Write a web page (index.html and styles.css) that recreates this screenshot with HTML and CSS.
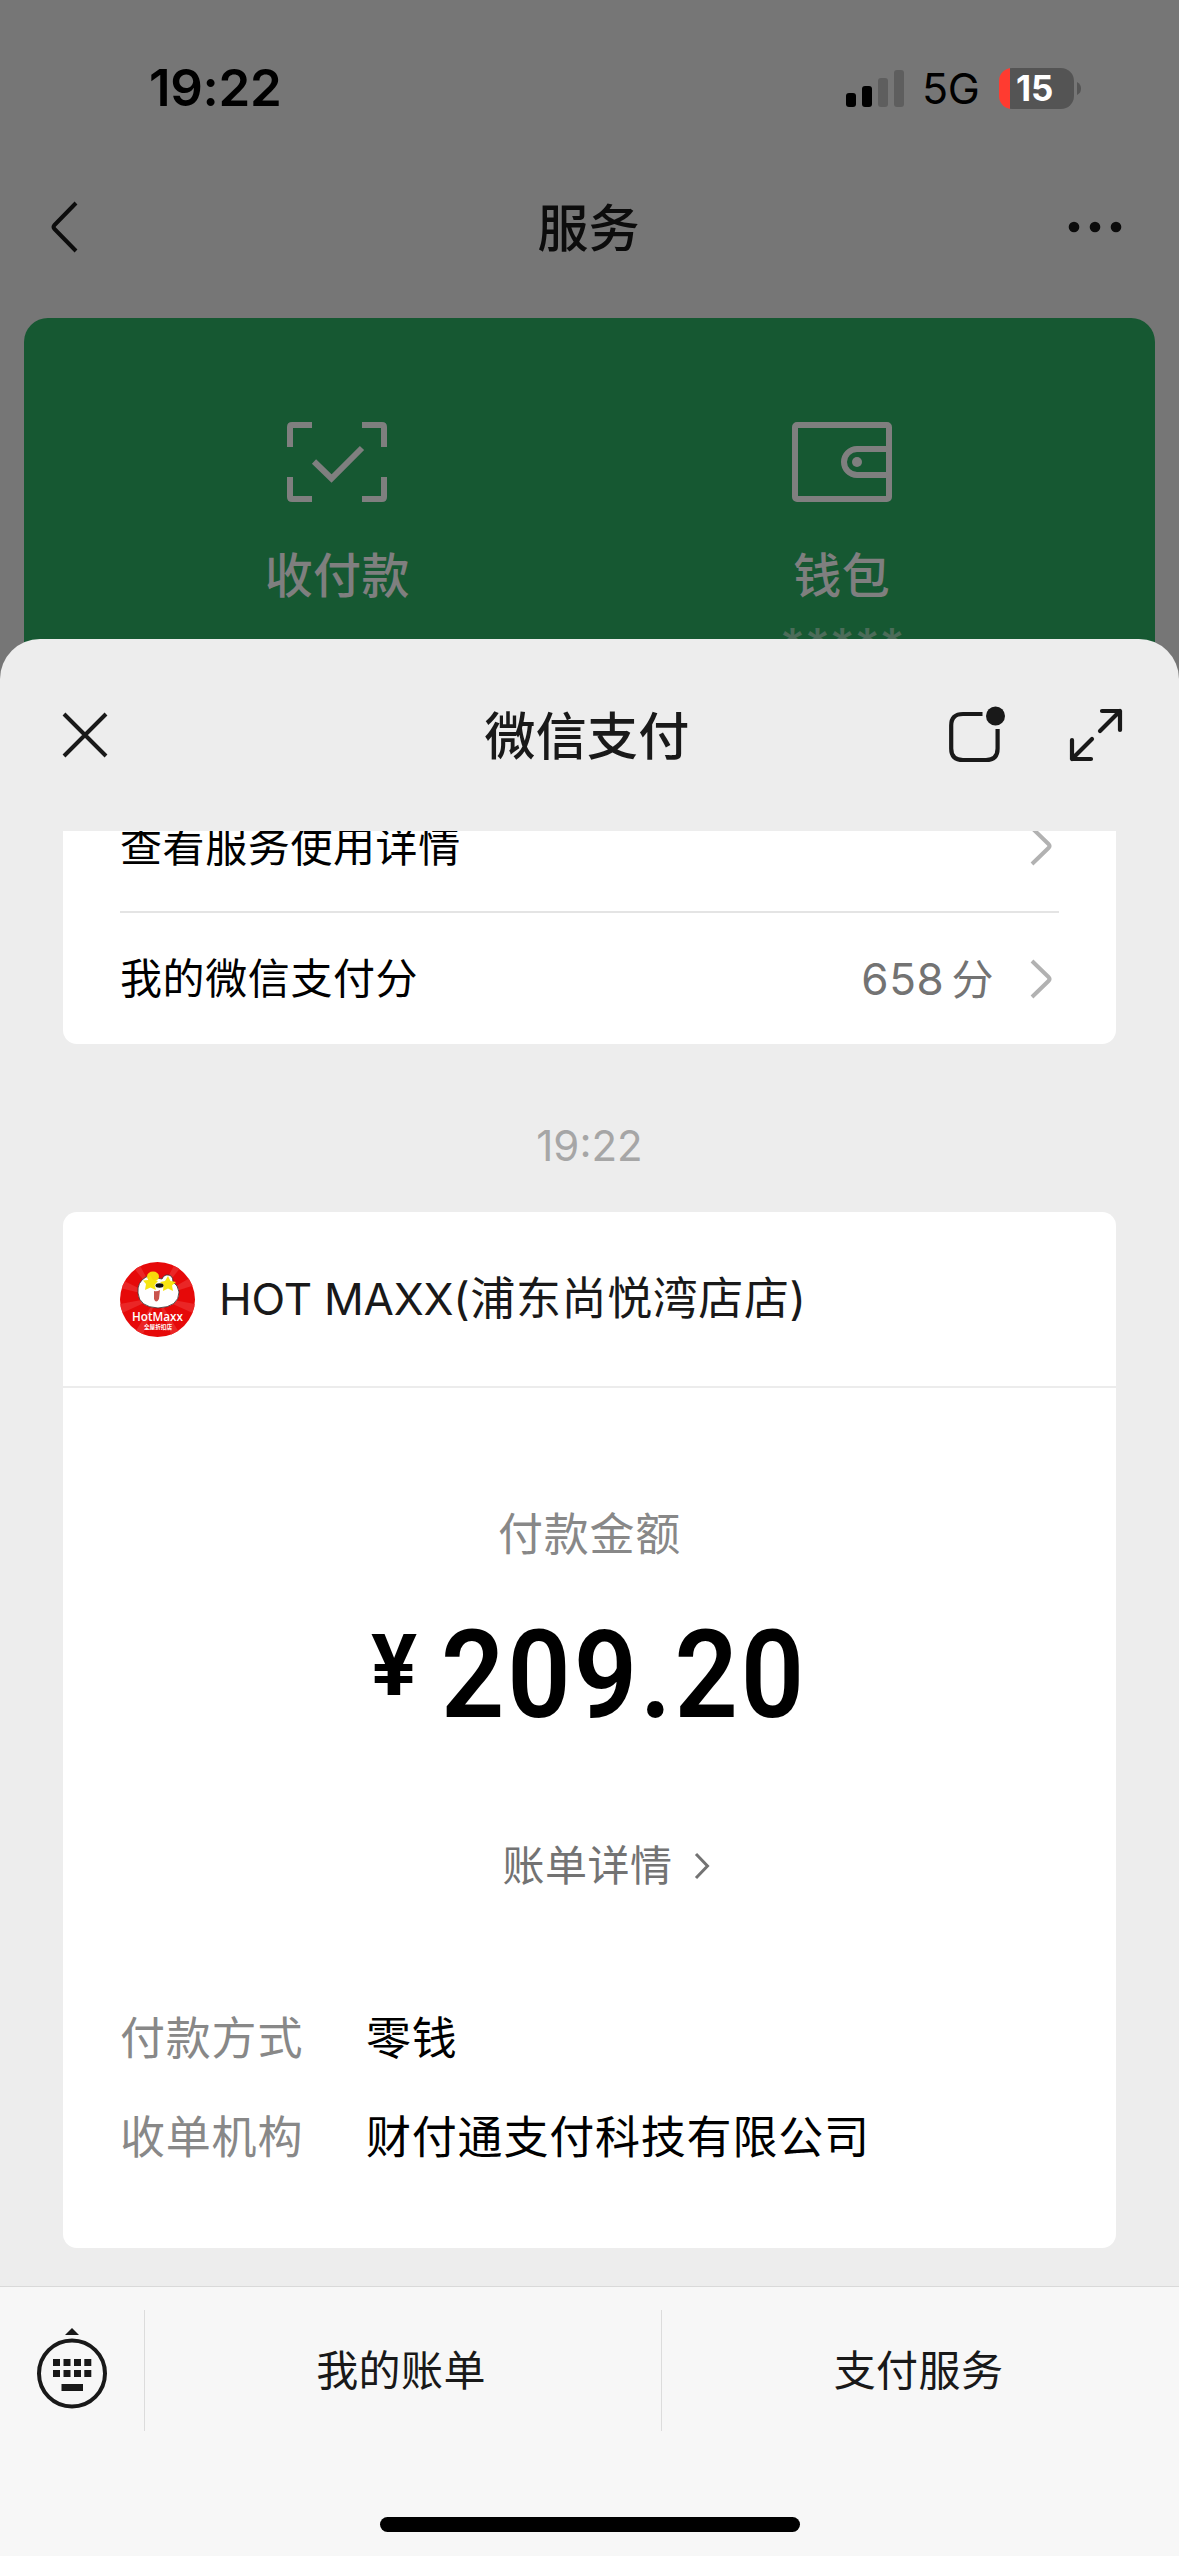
FILE: index.html
```html
<!DOCTYPE html>
<html lang="zh-CN">
<head>
<meta charset="utf-8">
<title>微信支付</title>
<link rel="stylesheet" href="styles.css">
</head>
<body>
<div class="screen">
  <div class="backdrop">
    <div class="status">
      <span class="status-time">19:22</span>
      <div class="status-right">
        <svg class="signal" width="58" height="37" viewBox="0 0 58 37">
          <rect x="0" y="23" width="10" height="14" rx="3"/>
          <rect x="16" y="16" width="10" height="21" rx="3"/>
          <rect x="32" y="8" width="10" height="29" rx="3" fill="#5e5e5e"/>
          <rect x="48" y="0" width="10" height="37" rx="3" fill="#5e5e5e"/>
        </svg>
        <span class="network">5G</span>
        <div class="battery"><span class="battery-level">15</span></div>
        <svg class="battery-cap" width="4" height="13" viewBox="0 0 4 13"><path d="M0 0Q4 2 4 6.500T0 13Z" fill="#555"/></svg>
      </div>
    </div>
    <div class="nav">
      <svg width="28" height="52" viewBox="0 0 28 52" fill="none" stroke="#0c0c0c" stroke-width="4"><path d="M26 2L4.500 24Q2.500 26 4.500 28L26 50"/></svg>
      <span class="title">服务</span>
      <svg class="more" width="54" height="12" viewBox="0 0 54 12" fill="#0c0c0c"><circle cx="6" cy="6" r="5.300"/><circle cx="27" cy="6" r="5.300"/><circle cx="48" cy="6" r="5.300"/></svg>
    </div>
    <div class="services">
      <div class="service">
        <svg width="100" height="80" viewBox="0 0 100 80" fill="none" stroke="#7f7f7f" stroke-width="6"><path d="M3 25V5Q3 3 5 3H25M75 3H95Q97 3 97 5V25M97 55V75Q97 77 95 77H75M25 77H5Q3 77 3 75V55M27 39.500L44.500 56.500L75 26"/></svg>
        <span>收付款</span>
      </div>
      <div class="service">
        <svg width="100" height="80" viewBox="0 0 100 80" fill="none" stroke="#7f7f7f" stroke-width="6"><rect x="3" y="3" width="94" height="74" rx="2"/><path d="M97 27H65A13 13 0 0 0 65 53H97"/><circle cx="65" cy="40" r="5" fill="#7f7f7f" stroke="none"/></svg>
        <span>钱包</span>
        <span class="masked">*****</span>
      </div>
    </div>
  </div>

  <div class="sheet">
    <div class="sheet-head">
      <svg width="46" height="46" viewBox="0 0 46 46" stroke="#191919" stroke-width="4"><path d="M2 2L44 44M44 2L2 44"/></svg>
      <span class="title">微信支付</span>
      <div class="sheet-actions">
        <svg width="56" height="60" viewBox="0 0 56 60" fill="none" stroke="#191919" stroke-width="4.200"><path d="M33.500 9H14Q2.200 9 2.200 20.500V43.500Q2.200 55 14 55H37Q48.600 55 48.600 43.500V24"/><circle cx="46.500" cy="11" r="9.500" fill="#191919" stroke="none"/></svg>
        <svg width="54" height="54" viewBox="0 0 54 54" fill="none" stroke="#191919" stroke-width="4.200" stroke-linecap="round" stroke-linejoin="round"><path d="M33 3H51V22M51 3L31 23M3 32V51H22M3 51L23 31"/></svg>
      </div>
    </div>

    <div class="feed">
      <div class="card card-top">
        <div class="row row-cut"><span>查看服务使用详情</span>
          <svg class="chev" width="24" height="40" viewBox="0 0 24 40"><path d="M2 2L18.500 18Q20.500 20 18.500 22L2 38"/></svg></div>
        <div class="row row-score"><span>我的微信支付分</span>
          <div class="score"><span class="score-num">658</span><span>分</span>
          <svg class="chev" width="24" height="40" viewBox="0 0 24 40"><path d="M2 2L18.500 18Q20.500 20 18.500 22L2 38"/></svg></div></div>
      </div>
      <div class="stamp">19:22</div>
      <div class="card card-pay">
        <div class="merchant">
          <svg width="75" height="75" viewBox="0 0 75 75">
            <defs><clipPath id="disc"><circle cx="37.500" cy="37.500" r="37.500"/></clipPath></defs>
            <g clip-path="url(#disc)">
              <rect width="75" height="75" fill="#e60909"/>
              <path fill="#ea2626" d="M37 35L9 0H18ZM37 35L56 0H65ZM37 35L75 13V23ZM37 35L0 17V26ZM37 35L0 42V52ZM37 35L75 42V52ZM37 35L12 75H22ZM37 35L52 75H62Z"/>
            </g>
            <path d="M26 15Q17 20 18 31Q19 45 38 46Q59 45 59 30Q58 23 53 20Q53 12 46 13Q43 14 42 17Q37 15 32 17Q29 13 26 15Z" fill="#fff" stroke="#333" stroke-width=".8"/>
            <ellipse cx="33" cy="14.500" rx="6" ry="5" fill="#f8d90c"/>
            <path d="M30 13L33 18L38 19L34.500 23L36 28L30.500 25.500L25 28L26 22L23 18.500L28 18ZM48 14L50.500 19L56 20L52 23.500L53 29L48 26.500L43 29L43.500 23.500L40 20L45 19Z" fill="#f7e510"/>
            <ellipse cx="39.500" cy="23.500" rx="4" ry="2.200" fill="#111"/>
            <path d="M34 29Q37 30 40 28L39 37Q36 42 34 37Z" fill="#c9544d"/>
            <text x="12" y="58.500" class="logo-name" textLength="51" lengthAdjust="spacingAndGlyphs">HotMaxx</text>
            <text x="24" y="66.500" class="logo-sub" textLength="28" lengthAdjust="spacingAndGlyphs">全屋折扣店</text>
          </svg>
          <span class="merchant-name">HOT MAXX<span class="branch">(浦东尚悦湾店店)</span></span>
        </div>
        <div class="pay-label">付款金额</div>
        <div class="amount"><span class="yen">¥</span><span class="digits">209.20</span></div>
        <div class="bill"><span>账单详情</span><svg width="16" height="28" viewBox="0 0 16 28" fill="none" stroke="#737373" stroke-width="3"><path d="M2 2L13.500 14L2 26"/></svg></div>
        <dl class="facts">
          <dt>付款方式</dt><dd>零钱</dd>
          <dt>收单机构</dt><dd>财付通支付科技有限公司</dd>
        </dl>
      </div>
    </div>

    <div class="toolbar">
      <div class="tool-key">
        <svg width="72" height="84" viewBox="0 0 72 84" fill="#191919"><path d="M36 2L43 9H29Z"/><circle cx="36" cy="47.500" r="33" fill="none" stroke="#191919" stroke-width="4"/><path d="M17 33h7v7h-7zM27.500 33h7v7h-7zM38 33h7v7h-7zM48.300 33h7v7h-7zM17 44h7v7h-7zM27.500 44h7v7h-7zM38 44h7v7h-7zM48.300 44h7v7h-7zM25.500 58h21.500v7h-21.500z"/></svg>
      </div>
      <div class="tool">我的账单</div>
      <div class="tool">支付服务</div>
    </div>
    <div class="home"></div>
  </div>
</div>
</body>
</html>
```

FILE: styles.css
```css
* { box-sizing: border-box; }
body {
  margin: 0;
  background: #767676;
  font-family: Inter, "Noto Sans CJK SC", sans-serif;
  color: #000;
}
svg { display: block; flex: none; }
.screen { width: 1179px; height: 2556px; overflow: hidden; }

.backdrop { height: 720px; background: #767676; overflow: hidden; }
.status {
  height: 164px;
  padding: 12px 98px 0 149px;
  display: flex;
  align-items: center;
  justify-content: space-between;
}
.status-time { font-size: 51px; font-weight: 600; line-height: 60px; letter-spacing: -0.3px; }
.status-right { display: flex; align-items: center; }
.network { margin-left: 18px; width: 58px; font-size: 43px; line-height: 52px; letter-spacing: -0.500px; }
.battery {
  margin-left: 19px;
  width: 75px;
  height: 41px;
  border-radius: 13px;
  background: linear-gradient(90deg, #ff3b30 11px, #545454 11px);
}
.battery-level {
  display: block;
  padding-left: 17px;
  color: #fff;
  font-size: 35px;
  font-weight: 700;
  line-height: 41px;
}
.battery-cap { margin-left: 3px; }

.nav {
  height: 126px;
  padding: 0 57px 0 50px;
  display: grid;
  grid-template-columns: 1fr auto 1fr;
  align-items: center;
  color: #0c0c0c;
}
.more { justify-self: end; }
.nav .title { margin: 3px 0 0 5px; }
.title { font-size: 51px; font-weight: 500; line-height: 60px; }

.services {
  margin: 28px 24px 0;
  height: 420px;
  padding: 104px 61px 0;
  border-radius: 24px;
  background: #165832;
  display: grid;
  grid-template-columns: 1fr 1fr;
}
.service {
  display: flex;
  flex-direction: column;
  align-items: center;
  color: #7f7f7f;
  font-size: 48px;
  font-weight: 500;
  letter-spacing: 0.400px;
  line-height: 60px;
}
.service svg { margin-bottom: 44px; }
.masked { margin-top: 10px; font-size: 48px; font-weight: 600; letter-spacing: -1px; color: #4b6c59; }

.sheet {
  position: relative;
  margin-top: -81px;
  height: 1917px;
  border-radius: 40px 40px 0 0;
  background: #ededed;
  display: flex;
  flex-direction: column;
}
.sheet-head {
  height: 192px;
  padding: 0 56px 0 62px;
  display: grid;
  grid-template-columns: 1fr auto 1fr;
  align-items: center;
  color: #191919;
}
.sheet-head .title { margin: 3px 11px 0 0; letter-spacing: 0.300px; }
.sheet-actions { display: flex; align-items: center; justify-content: flex-end; gap: 64px; }

.feed { height: 1455px; padding: 0 63px; overflow: hidden; }
.card { background: #fff; border-radius: 14px; }
.card-top { height: 213px; padding: 0 57px; border-radius: 0 0 14px 14px; overflow: hidden; }
.row {
  display: flex;
  align-items: center;
  justify-content: space-between;
  font-size: 42px;
  letter-spacing: 0.600px;
  height: 132px;
}
.row > span { margin-top: -6px; }
.row-cut { margin-top: -50px; border-bottom: 2px solid #e4e4e4; }
.row-score { height: 131px; }
.score { display: flex; align-items: center; color: #737373; }
.score span { margin-top: -5px; }
.score .score-num { margin: 0 7px 0 0; font-size: 44px; }
.score .chev { margin-left: 36px; }
.chev { margin-right: 5px; fill: none; stroke: #b2b2b2; stroke-width: 4; }
.stamp { height: 168px; padding-top: 72px; font-size: 42px; line-height: 60px; text-align: center; color: #a6a6a6; }

.card-pay { height: 1036px; }
.merchant {
  height: 176px;
  padding: 0 57px;
  display: flex;
  align-items: center;
  gap: 24px;
  border-bottom: 2px solid #ececec;
  font-size: 44px;
  line-height: 60px;
  color: #191919;
}
.merchant-name { margin-top: -1px; letter-spacing: -0.200px; }
.branch { font-size: 45px; letter-spacing: 0.600px; }
.logo-name { font-family: "Open Sans", sans-serif; font-size: 13px; font-weight: 600; fill: #fff; }
.logo-sub { font-family: "Noto Sans CJK SC", sans-serif; font-size: 6px; font-weight: 700; fill: #fff; }
.pay-label { margin-top: 117px; font-size: 45px; line-height: 60px; letter-spacing: 0.700px; text-align: center; color: #888; }
.amount {
  margin-top: 46px;
  height: 130px;
  padding-left: 308px;
  display: flex;
  font-family: Roboto, sans-serif;
}
.yen { width: 70px; padding-top: 5px; font-size: 86px; font-weight: 700; line-height: 100px; }
.digits {
  font-size: 122px;
  font-weight: 600;
  line-height: 130px;
  letter-spacing: 3.200px;
  transform: scaleX(.91);
  transform-origin: left;
}
.bill {
  margin-top: 95px;
  padding-left: 33px;
  display: flex;
  align-items: center;
  justify-content: center;
  gap: 21px;
  font-size: 42px;
  line-height: 60px;
  letter-spacing: 0.500px;
  color: #737373;
}
.facts {
  margin: 113px 57px 0;
  display: grid;
  grid-template-columns: 246px 1fr;
  row-gap: 39px;
  font-size: 45px;
  line-height: 60px;
  letter-spacing: 0.800px;
}
.facts dt { color: #888; }
.facts dd { margin: 0; }

.toolbar {
  height: 170px;
  border-top: 1px solid #d9d9d9;
  padding: 23px 0 26px;
  display: grid;
  grid-template-columns: 144px 517px 1fr;
  background: #f7f7f7;
}
.tool-key { display: flex; justify-content: center; padding-top: 16px; }
.tool {
  padding-right: 4px;
  border-left: 1px solid #dcdcdc;
  font-size: 42px;
  letter-spacing: 0.400px;
  line-height: 121px;
  text-align: center;
  color: #191919;
}
.home { flex: 1; background: #f7f7f7; padding-top: 61px; }
.home::before { content: ""; display: block; width: 420px; height: 15px; margin: 0 auto; border-radius: 8px; background: #000; }
```
